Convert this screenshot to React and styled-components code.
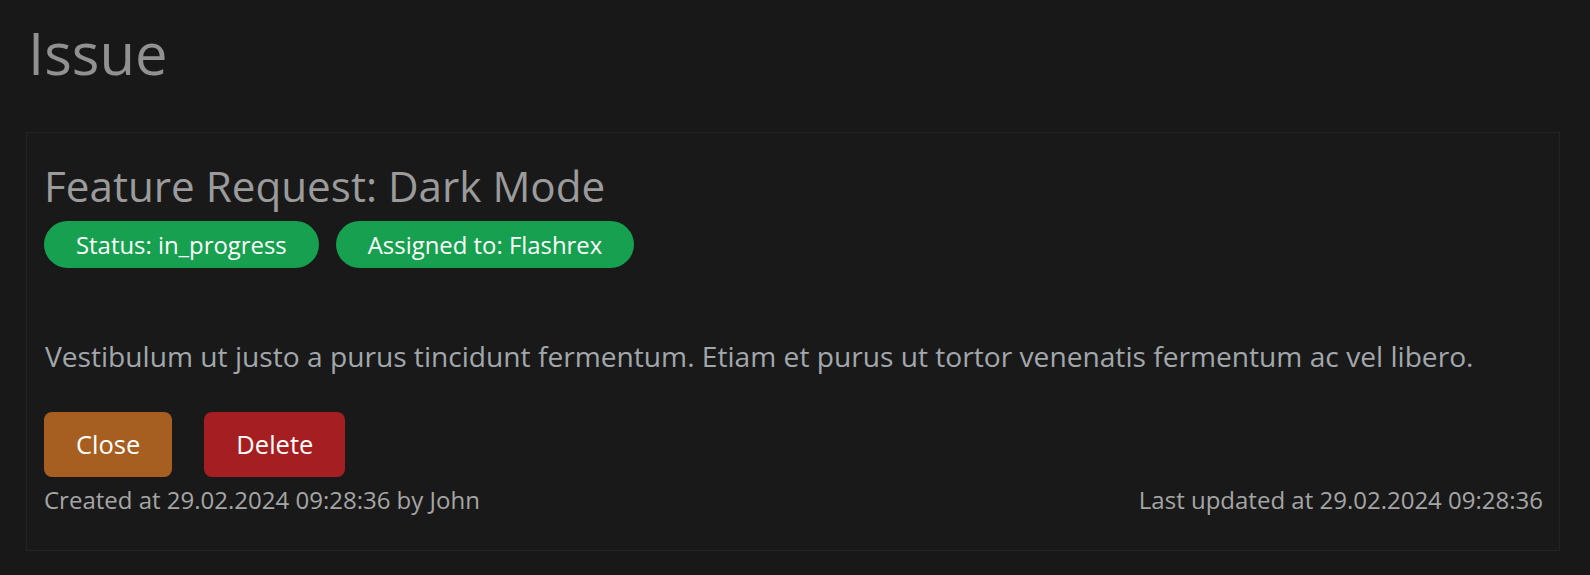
import React from "react";
import styled, { createGlobalStyle } from "styled-components";

const GlobalStyle = createGlobalStyle`
  html, body {
    margin: 0;
    padding: 0;
    background-color: #181818;
    font-family: "Open Sans", "Noto Sans", sans-serif;
  }
`;

const Page = styled.div`
  padding: 18px 30px 24px 26px;
`;

const PageTitle = styled.h1`
  margin: 0 0 44px 2px;
  font-size: 58px;
  font-weight: 400;
  line-height: 1.2;
  color: #919191;
`;

const Card = styled.div`
  border: 1px solid #232323;
  background-color: #191919;
  padding: 27px 16px 33px 17px;
`;

const IssueTitle = styled.h2`
  margin: 0;
  font-size: 42.2px;
  font-weight: 400;
  line-height: 1.25;
  color: #9b9b9b;
`;

const Badges = styled.div`
  display: flex;
  gap: 17px;
  margin-top: 9px;
`;

const Badge = styled.span`
  display: inline-flex;
  align-items: center;
  height: 47px;
  padding: 0 32px;
  border-radius: 24px;
  background-color: #16a04f;
  color: #ffffff;
  font-size: 23.9px;
`;

const Description = styled.p`
  margin: 70px 0 0 1px;
  font-size: 28.15px;
  line-height: 1.3;
  color: #a2a7ac;
`;

const Actions = styled.div`
  display: flex;
  gap: 32px;
  margin-top: 37px;
`;

const Button = styled.button`
  height: 65px;
  padding: 0 32px;
  border: none;
  border-radius: 8px;
  background-color: ${(p) => (p.$variant === "danger" ? "#a51e21" : "#a65f20")};
  color: #ffffff;
  font-family: "Open Sans", sans-serif;
  font-size: 25.5px;
  cursor: pointer;
`;

const Meta = styled.div`
  display: flex;
  justify-content: space-between;
  margin-top: 6px;
  font-size: 24px;
  line-height: 1.4;
  color: #a5a5a5;
`;

export default function App() {
  return (
    <>
      <GlobalStyle />
      <Page>
        <PageTitle>Issue</PageTitle>
        <Card>
          <IssueTitle>Feature Request: Dark Mode</IssueTitle>
          <Badges>
            <Badge>Status: in_progress</Badge>
            <Badge>Assigned to: Flashrex</Badge>
          </Badges>
          <Description>
            Vestibulum ut justo a purus tincidunt fermentum. Etiam et purus ut tortor venenatis fermentum ac vel libero.
          </Description>
          <Actions>
            <Button>Close</Button>
            <Button $variant="danger">Delete</Button>
          </Actions>
          <Meta>
            <span>Created at 29.02.2024 09:28:36 by John</span>
            <span>Last updated at 29.02.2024 09:28:36</span>
          </Meta>
        </Card>
      </Page>
    </>
  );
}
